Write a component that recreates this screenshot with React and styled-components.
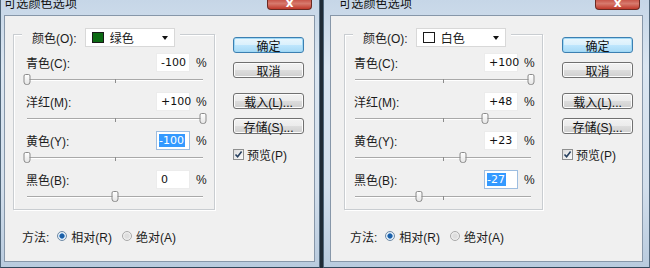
import React from 'react';
import styled, { createGlobalStyle, css } from 'styled-components';

const Global = createGlobalStyle`
  html, body { margin: 0; padding: 0; background: #1f2b36; }
  body {
    font-family: "Liberation Sans", "Noto Sans CJK SC", sans-serif;
    font-size: 12px;
    color: #1b1b1b;
  }
`;

const Page = styled.div`
  display: flex;
  gap: 3px;
  width: 650px;
  height: 268px;
  overflow: hidden;
  background: #1f2b36;
`;

const Dialog = styled.div`
  flex: 0 0 ${p => p.$w}px;
  height: 268px;
  box-sizing: border-box;
  display: flex;
  flex-direction: column;
  padding: 0 ${p => p.$fr}px 5px ${p => p.$fl}px;
  background: linear-gradient(180deg, #c6d6e7 0%, #dbe6f1 25%, #d3dfec 70%, #b9cbde 100%);
  border-left: 1px solid #51677b;
  border-right: 1px solid #51677b;
  border-bottom: 1px solid #33475a;
`;

const TitleBar = styled.div`
  height: 15px;
  flex: 0 0 15px;
  display: flex;
  justify-content: space-between;
  align-items: flex-start;
  overflow: hidden;
  padding-left: ${p => p.$tx}px;
`;

const TitleText = styled.span`
  margin-top: -3px;
  line-height: 14px;
  font-size: 12px;
  color: #111;
  letter-spacing: 0.2px;
`;

const CloseButton = styled.div`
  width: 43px;
  height: 9px;
  margin-right: ${p => p.$mr}px;
  border: 1px solid #6b2a22;
  border-top: none;
  border-radius: 0 0 4px 4px;
  background: linear-gradient(180deg, #c8564a 0%, #d77a6d 40%, #c0392b 100%);
  display: flex;
  justify-content: center;
  overflow: hidden;
  color: #fff;
  font-weight: bold;
  font-size: 12px;
  line-height: 6px;
  font-family: "DejaVu Sans", sans-serif;
`;

const Body = styled.div`
  flex: 1;
  background: #f0f0f0;
  border: 1px solid #8797a9;
  display: grid;
  grid-template-columns: ${p => p.$gw}px 71px;
  column-gap: ${p => p.$cg}px;
  grid-template-rows: auto 1fr;
  align-content: start;
  padding: 18px 0 0 ${p => p.$pl}px;
`;

const Group = styled.div`
  position: relative;
  box-sizing: border-box;
  width: ${p => p.$gw}px;
  border: 1px solid #c9cdd1;
  box-shadow: inset 1px 1px 0 #ffffff, 1px 1px 0 #ffffff;
  padding: 18px 8px 0 ${p => p.$pl}px;
`;

const Legend = styled.div`
  position: absolute;
  top: -7px;
  left: 8px;
  display: flex;
  align-items: center;
  gap: 8px;
  padding: 0 5px 0 10px;
  background: #f0f0f0;
`;

const SelectBox = styled.div`
  width: 90px;
  height: 19px;
  box-sizing: border-box;
  background: #fff;
  border: 1px solid #d8d8d8;
  display: flex;
  align-items: center;
  padding-left: 6px;
  gap: 6px;
`;

const Swatch = styled.span`
  width: 12px;
  height: 11px;
  box-sizing: border-box;
  border: 1px solid #1a1a1a;
  background: ${p => p.$c};
`;

const SelectText = styled.span`
  flex: 1;
`;

const Arrow = styled.span`
  width: 0;
  height: 0;
  border-left: 3px solid transparent;
  border-right: 3px solid transparent;
  border-top: 4px solid #111;
  margin-right: 6px;
`;

const Row = styled.div`
  display: grid;
  grid-template-columns: 1fr 34px 10px;
  column-gap: 6px;
  align-items: center;
  height: 19px;
`;

const Label = styled.span`
  white-space: nowrap;
`;

const NumBox = styled.div`
  height: 19px;
  box-sizing: border-box;
  background: #fff;
  border: 1px solid ${p => (p.$focus ? '#9dbde0' : '#ececec')};
  display: flex;
  align-items: center;
  padding-left: ${p => (p.$focus ? 2 : 4)}px;
  color: #111;
  font-family: "DejaVu Sans", "Liberation Sans", sans-serif;
  font-size: 11px;
`;

const Selected = styled.span`
  background: #3399ff;
  color: #fff;
  line-height: 13px;
  padding-right: 1px;
`;

const Percent = styled.span`
  font-size: 12px;
`;

const SliderArea = styled.div`
  height: 20px;
  margin: 0 3px 0 1px;
  position: relative;
`;

const Track = styled.div`
  position: relative;
  top: 7px;
  height: 1px;
  background: #a9a9a9;
  box-shadow: 0 1px 0 #ffffff;
`;

const Tick = styled.div`
  position: absolute;
  left: 50%;
  top: 0;
  width: 1px;
  height: 4px;
  background: #8c8c8c;
`;

const Thumb = styled.div`
  position: absolute;
  top: -5px;
  width: 7px;
  height: 11px;
  box-sizing: border-box;
  transform: translateX(-50%);
  border: 1px solid #8a8a8a;
  border-radius: 2px 2px 3px 3px;
  background: linear-gradient(180deg, #ffffff 0%, #e6e6e6 100%);
`;

const MethodRow = styled.div`
  grid-column: 1 / 2;
  display: flex;
  align-items: center;
  height: 16px;
  margin-top: 18px;
  padding-left: ${p => p.$pl}px;
`;

const MethodLabel = styled.span`
  margin-right: 8px;
`;

const RadioItem = styled.label`
  display: flex;
  align-items: center;
  gap: 4px;
  margin-right: 10px;
`;

const RadioDot = styled.span`
  width: 10px;
  height: 10px;
  box-sizing: border-box;
  border-radius: 50%;
  border: 1px solid ${p => (p.$on ? '#6e8aa5' : '#a8a8a8')};
  background: ${p =>
    p.$on
      ? 'radial-gradient(circle, #1c5fa6 0 2px, #5b9ad8 2.5px, #e6eef6 3px)'
      : 'radial-gradient(circle, #dedede 0 2px, #f3f3f3 4px)'};
`;

const ButtonCol = styled.div`
  display: flex;
  flex-direction: column;
  margin-top: 3px;
  grid-row: 1 / 3;
  grid-column: 2 / 3;
`;

const Btn = styled.div`
  height: 16px;
  box-sizing: border-box;
  margin-top: ${p => p.$mt || 0}px;
  border-radius: 3px;
  display: flex;
  align-items: center;
  justify-content: center;
  font-size: 12px;
  color: #111;
  ${p =>
    p.$default
      ? css`
          border: 1px solid #3c7fb1;
          background: linear-gradient(180deg, #eaf6fd 0%, #d9f0fc 50%, #bee6fd 51%, #a7d9f5 100%);
          box-shadow: inset 0 0 0 1px #9fd8f5;
        `
      : css`
          border: 1px solid #707070;
          background: linear-gradient(180deg, #f2f2f2 0%, #ebebeb 50%, #dddddd 51%, #cfcfcf 100%);
          box-shadow: inset 0 0 0 1px #fcfcfc;
        `}
`;

const CheckRow = styled.label`
  display: flex;
  align-items: center;
  gap: 3px;
  margin-top: 14px;
  height: 13px;
`;

const CheckBox = styled.span`
  width: 11px;
  height: 11px;
  box-sizing: border-box;
  border: 1px solid #8e8f8f;
  background: linear-gradient(135deg, #dcdcdc 0%, #fbfbfb 100%);
  display: flex;
  align-items: center;
  justify-content: center;
`;

function Slider({ value }) {
  return (
    <SliderArea>
      <Track>
        <Tick />
        <Thumb style={{ left: `${(value + 100) / 2}%` }} />
      </Track>
    </SliderArea>
  );
}

function Channel({ label, text, value, focus }) {
  return (
    <>
      <Row>
        <Label>{label}</Label>
        <NumBox $focus={focus}>{focus ? <Selected>{text}</Selected> : text}</NumBox>
        <Percent>%</Percent>
      </Row>
      <Slider value={value} />
    </>
  );
}

function ColorDialog({ cfg }) {
  return (
    <Dialog $w={cfg.w} $fl={cfg.fl} $fr={cfg.fr}>
      <TitleBar $tx={cfg.tx}>
        <TitleText>可选颜色选项</TitleText>
        <CloseButton $mr={cfg.closeMr}>x</CloseButton>
      </TitleBar>
      <Body $gw={cfg.gw} $cg={cfg.cg} $pl={cfg.bodyPl}>
        <Group $gw={cfg.gw} $pl={cfg.groupPl}>
          <Legend>
            <Label>颜色(O):</Label>
            <SelectBox>
              <Swatch $c={cfg.swatch} />
              <SelectText>{cfg.colorName}</SelectText>
              <Arrow />
            </SelectBox>
          </Legend>
          {cfg.channels.map(ch => (
            <Channel key={ch.label} {...ch} />
          ))}
        </Group>
        <ButtonCol>
          <Btn $default>确定</Btn>
          <Btn $mt={9}>取消</Btn>
          <Btn $mt={15}>载入(L)...</Btn>
          <Btn $mt={9}>存储(S)...</Btn>
          <CheckRow>
            <CheckBox>
              <svg width="9" height="9" viewBox="0 0 9 9">
                <path d="M1.5 4.5 L3.6 6.8 L7.6 1.6" fill="none" stroke="#27405f" strokeWidth="1.6" />
              </svg>
            </CheckBox>
            <span>预览(P)</span>
          </CheckRow>
        </ButtonCol>
        <MethodRow $pl={cfg.methodPl}>
          <MethodLabel>方法:</MethodLabel>
          <RadioItem>
            <RadioDot $on />
            <span>相对(R)</span>
          </RadioItem>
          <RadioItem>
            <RadioDot />
            <span>绝对(A)</span>
          </RadioItem>
        </MethodRow>
      </Body>
    </Dialog>
  );
}

const dialogs = [
  {
    w: 320, fl: 3, fr: 4, tx: 0, closeMr: 3,
    gw: 202, cg: 18, bodyPl: 8, groupPl: 12, methodPl: 9,
    swatch: '#0c6a14', colorName: '绿色',
    channels: [
      { label: '青色(C):', text: '-100', value: -100 },
      { label: '洋红(M):', text: '+100', value: 100 },
      { label: '黄色(Y):', text: '-100', value: -100, focus: true },
      { label: '黑色(B):', text: '0', value: 0 },
    ],
  },
  {
    w: 327, fl: 6, fr: 6, tx: 9, closeMr: 3,
    gw: 199, cg: 19, bodyPl: 13, groupPl: 9, methodPl: 6,
    swatch: '#ffffff', colorName: '白色',
    channels: [
      { label: '青色(C):', text: '+100', value: 100 },
      { label: '洋红(M):', text: '+48', value: 48 },
      { label: '黄色(Y):', text: '+23', value: 23 },
      { label: '黑色(B):', text: '-27', value: -27, focus: true },
    ],
  },
];

export default function App() {
  return (
    <>
      <Global />
      <Page>
        {dialogs.map((d, i) => (
          <ColorDialog key={i} cfg={d} />
        ))}
      </Page>
    </>
  );
}
